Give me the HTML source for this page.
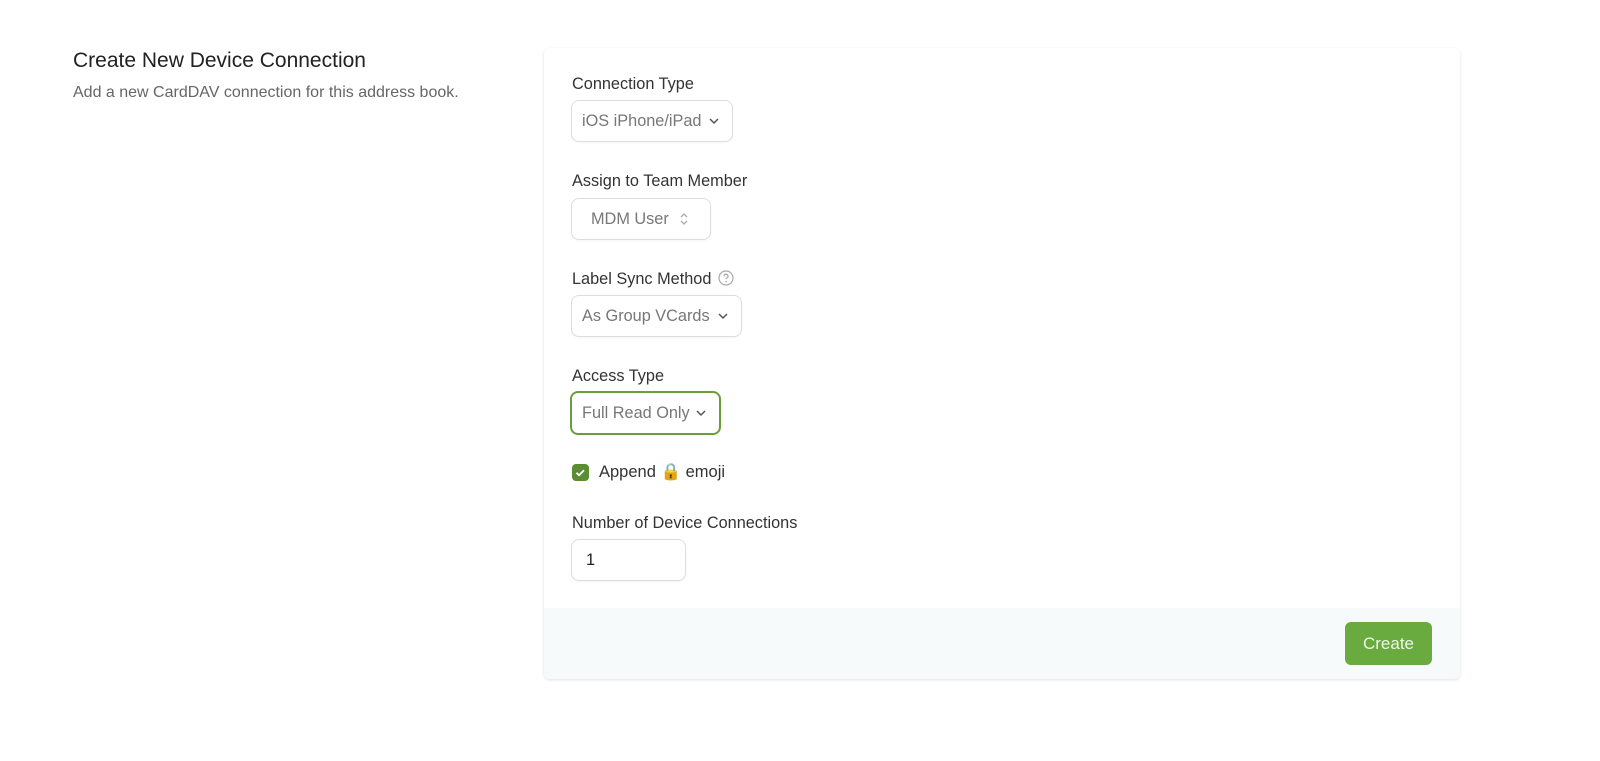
<!DOCTYPE html>
<html><head><style>
body{margin:0;width:1600px;height:761px;background:#fff;font-family:"Liberation Sans",sans-serif;position:relative;overflow:hidden}
.abs{position:absolute}
h1{position:absolute;left:73px;top:49px;margin:0;font-size:21px;font-weight:normal;color:#222;}
.sub{left:73px;top:84px;font-size:16px;color:#666}
.card{left:544px;top:48px;width:916px;height:631px;border-radius:6px;box-shadow:0 1px 3px rgba(0,0,0,.12);background:#fff;overflow:hidden}
.foot{position:absolute;left:0;bottom:0;width:100%;height:71px;background:#f6fafa}
.lab{font-size:16.3px;color:#333}
.sel{border:1px solid #ddd;border-radius:8px;height:42px;box-sizing:border-box;font-size:16.3px;color:#777;display:flex;align-items:center;padding-left:10px;box-shadow:0 1px 2px rgba(0,0,0,.04)}
.chev{position:absolute;right:12px;top:14px}
.btn{left:1345px;top:622px;width:87px;height:43px;background:#6aab3f;border-radius:6px;color:#eef7e8;font-size:17px;display:flex;align-items:center;justify-content:center}
</style></head><body>
<h1>Create New Device Connection</h1>
<div class="abs sub">Add a new CardDAV connection for this address book.</div>
<div class="abs card"><div class="foot"></div></div>
<div class="abs lab" style="left:572px;top:75px">Connection Type</div>
<div class="abs sel" style="left:571px;top:100px;width:162px">iOS iPhone/iPad<svg class="chev" width="12" height="12" viewBox="0 0 12 12"><path d="M2 4l4 4 4-4" fill="none" stroke="#555" stroke-width="1.5"/></svg></div>
<div class="abs lab" style="left:572px;top:172px">Assign to Team Member</div>
<div class="abs sel" style="left:571px;top:198px;width:140px;padding-left:19px">MDM User<svg class="chev" style="right:20px;top:12px" width="12" height="16" viewBox="0 0 12 16"><path d="M3 6l3-3 3 3M3 10l3 3 3-3" fill="none" stroke="#aaa" stroke-width="1.3"/></svg></div>
<div class="abs lab" style="left:572px;top:270px">Label Sync Method <svg style="vertical-align:-2px;margin-left:2px" width="16" height="16" viewBox="0 0 16 16"><circle cx="8" cy="8" r="7" fill="none" stroke="#aaa" stroke-width="1.2"/><path d="M6 6.2a2 2 0 1 1 2.7 1.8c-.5.3-.7.6-.7 1.3" fill="none" stroke="#aaa" stroke-width="1.2"/><circle cx="8" cy="11.5" r=".8" fill="#aaa"/></svg></div>
<div class="abs sel" style="left:571px;top:295px;width:171px">As Group VCards<svg class="chev" width="12" height="12" viewBox="0 0 12 12"><path d="M2 4l4 4 4-4" fill="none" stroke="#555" stroke-width="1.5"/></svg></div>
<div class="abs lab" style="left:572px;top:367px">Access Type</div>
<div class="abs sel" style="left:570px;top:391px;width:151px;height:44px;border:2.5px solid #6a9e3c">Full Read Only<svg class="chev" width="12" height="12" viewBox="0 0 12 12"><path d="M2 4l4 4 4-4" fill="none" stroke="#555" stroke-width="1.5"/></svg></div>
<div class="abs" style="left:572px;top:464px;width:17px;height:17px;background:#5b8d33;border-radius:4px"><svg width="17" height="17" viewBox="0 0 17 17"><path d="M4.5 8.8l2.5 2.4 5-5" fill="none" stroke="#fff" stroke-width="1.8"/></svg></div>
<div class="abs lab" style="left:599px;top:463px;font-size:16.5px">Append 🔒 emoji</div>
<div class="abs lab" style="left:572px;top:514px">Number of Device Connections</div>
<div class="abs sel" style="left:571px;top:539px;width:115px;color:#222;padding-left:14px">1</div>
<div class="abs btn">Create</div>
</body></html>
